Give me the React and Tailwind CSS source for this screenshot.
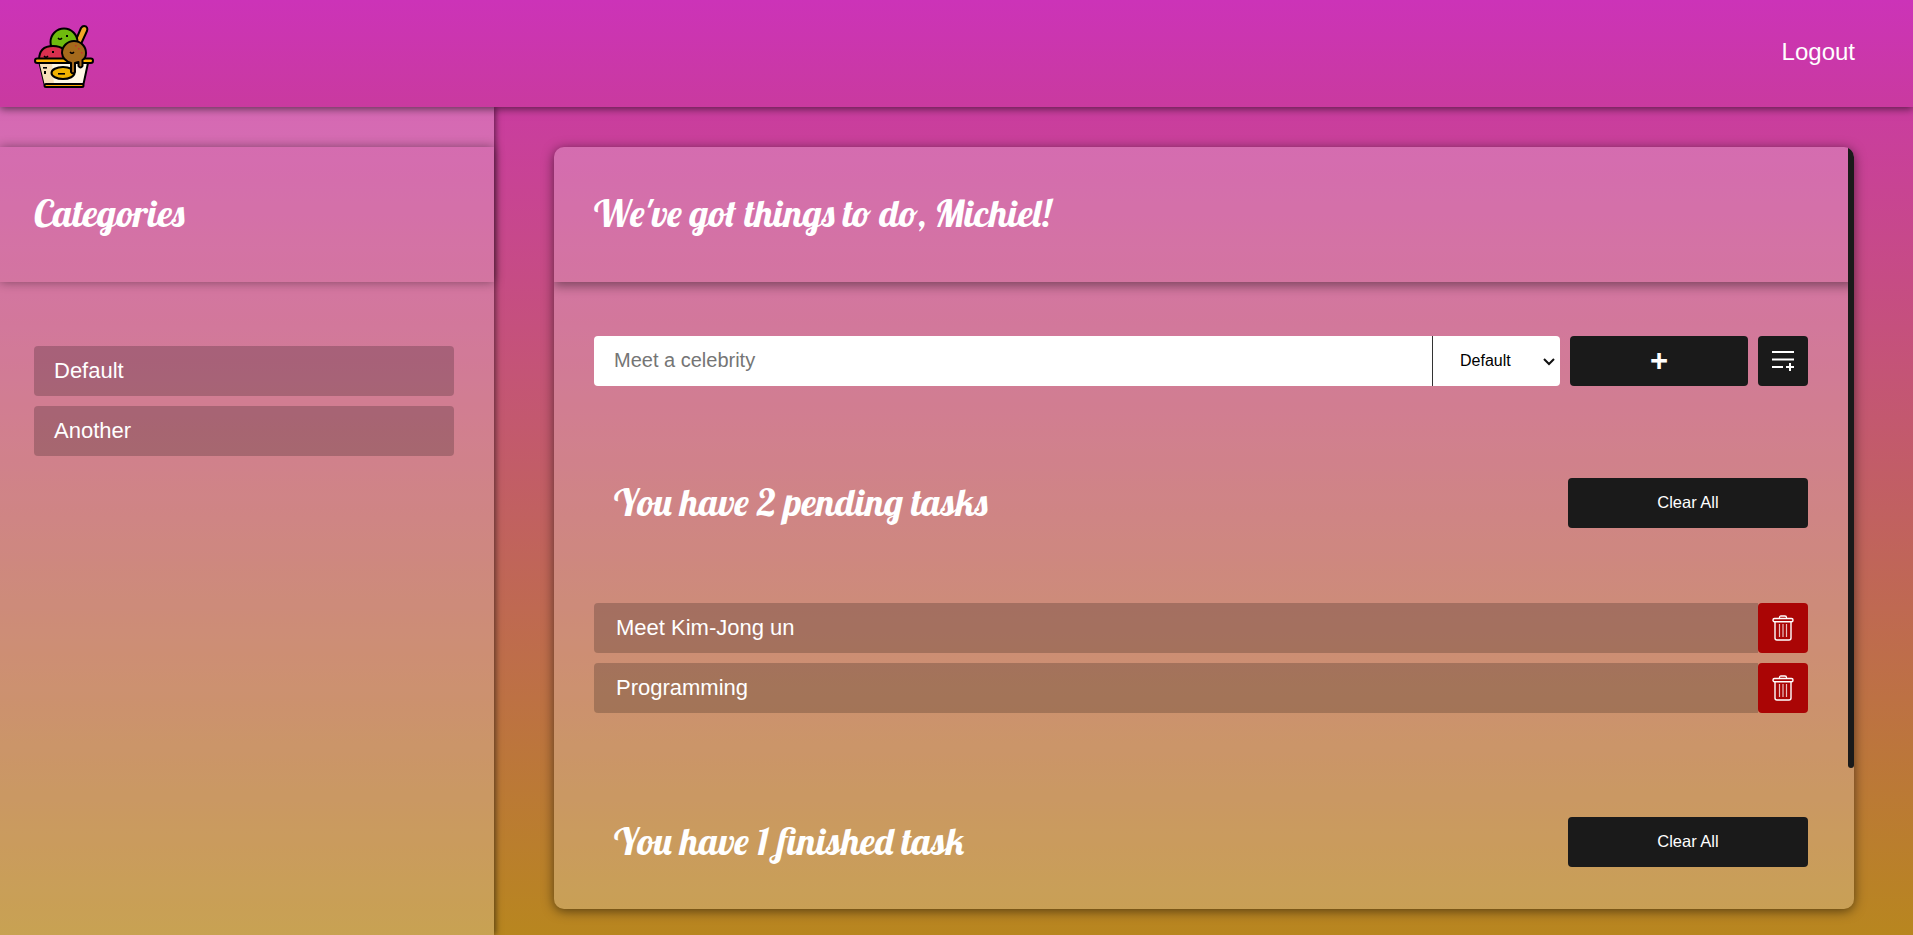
import React from "react";

const script = "font-['Lobster','Pacifico','Z003','URW_Chancery_L',cursive]";

function Logo() {
  return (
    <svg width="60" height="64" viewBox="34 24 60 64" className="mt-[5px] block">
      <g stroke="#000" strokeWidth="2" strokeLinejoin="round">
        <path d="M75 42 L81 28 Q83 25 86 26.5 Q88 28 87 31 L81 44 Z" fill="#f0a828" />
        <circle cx="64" cy="42" r="13.5" fill="#6fbb0e" />
        <path d="M39 60 Q39 46 53 46 Q67 46 67 60 Z" fill="#d9304f" />
        <path d="M39.5 63 H88 L83.5 84 H44.5 Z" fill="#fff8e6" />
        <path d="M39.5 63 H52 L54 84 H44.5 Z" fill="#f7dfb8" stroke="none" />
        <ellipse cx="63" cy="73" rx="11.5" ry="6" fill="#f2b200" />
        <rect x="35" y="58.5" width="58" height="4.5" rx="2.2" fill="#ffb400" />
        <rect x="44.5" y="84" width="39" height="3" rx="1.5" fill="#ffa800" />
        <path d="M62 53 A12 12 0 0 1 86 53 Q86 58 82.5 60 L82.5 66 Q80.5 69 78.5 66 L78.5 62 L75 63 L75 72 Q73 75 71 72 L71 63 Q62.5 60 62 53 Z" fill="#a56a1c" />
      </g>
      <g stroke="#000" strokeWidth="1.4" fill="none">
        <path d="M58 38 Q60 40.5 62 38" />
        <path d="M70 52 Q72 54.5 74 52" />
        <path d="M44 56 Q46 58.5 48 56" />
      </g>
      <g fill="#000">
        <rect x="43" y="67" width="4" height="1.6" />
        <rect x="44" y="71" width="2" height="3" />
        <rect x="58" y="73" width="7" height="1.6" />
        <rect x="66" y="35" width="2" height="2" />
        <rect x="52" y="51" width="2" height="2" />
      </g>
      <g fill="#c9302c">
        <rect x="78" y="48" width="1.5" height="1.5" />
        <rect x="75" y="45" width="1.5" height="1.5" />
        <rect x="81" y="52" width="1.5" height="1.5" />
      </g>
    </svg>
  );
}

function Trash() {
  return (
    <svg width="22" height="26" viewBox="0 0 22 26" fill="none" stroke="#fff" className="block">
      <path d="M7.5 3.5 V2.5 Q7.5 1 9 1 H13 Q14.5 1 14.5 2.5 V3.5" strokeWidth="1.3" />
      <rect x="1" y="3.5" width="20" height="3.2" rx="1.5" strokeWidth="1.4" />
      <path d="M3 6.7 V23 Q3 25 5 25 H17 Q19 25 19 23 V6.7" strokeWidth="1.4" />
      <path d="M7.5 9 V22 M11 9 V22 M14.5 9 V22" strokeWidth="1.2" strokeOpacity="0.75" />
    </svg>
  );
}

function ListPlus() {
  return (
    <svg width="24" height="22" viewBox="0 0 24 22" fill="none" stroke="#fff" strokeWidth="2" className="block">
      <path d="M1 2 H23 M1 9.5 H23 M1 17 H12 M15 17 H23 M19 13 V21" />
    </svg>
  );
}

function SectionHead({ children, className }) {
  return (
    <div className={`flex items-center justify-between ${className}`}>
      <h2 className={`${script} pb-[2px] pl-5 text-[38px] leading-[46px] text-white font-normal`}>{children}</h2>
      <button className="h-[50px] w-[240px] rounded-[4px] bg-[#1a1a1a] pb-[2px] text-[16.5px] text-white">Clear All</button>
    </div>
  );
}

function Task({ children, className }) {
  return (
    <div className={`flex h-[50px] ${className || ""}`}>
      <div className="flex flex-1 items-center rounded-l-[4px] bg-black/20 pb-[2px] pl-[22px] text-[22px] text-white">{children}</div>
      <button className="flex w-[50px] items-center justify-center rounded-[4px] bg-[#aa0505]">
        <Trash />
      </button>
    </div>
  );
}

export default function App() {
  return (
    <div className="flex h-[935px] flex-col overflow-hidden bg-[linear-gradient(180deg,#cc33b0_0%,#b8861f_100%)] font-['Liberation_Sans',Arial,sans-serif]">
      <header className="relative z-20 flex h-[107px] shrink-0 items-center justify-between bg-[linear-gradient(180deg,#cc33b8_0%,#c93a9f_100%)] pl-[34px] pr-[58px] shadow-[0_2px_8px_rgba(0,0,0,0.55)]">
        <Logo />
        <a className="pb-[4px] text-2xl text-white">Logout</a>
      </header>
      <div className="flex min-h-0 flex-1">
        <aside className="relative z-10 w-[494px] shrink-0 bg-white/[.23] pt-10 shadow-[2px_0_6px_rgba(0,0,0,0.5)]">
          <div className="flex h-[135px] items-center pb-[4px] pl-[34px] shadow-[0_0_10px_rgba(0,0,0,0.4)]">
            <h2 className={`${script} text-[38px] leading-[46px] text-white font-normal`}>Categories</h2>
          </div>
          <div className="mt-[64px] flex flex-col gap-[10px] px-[34px] pr-10">
            <div className="flex h-[50px] items-center rounded-[4px] bg-black/20 pb-[2px] pl-5 text-[22px] text-white">Default</div>
            <div className="flex h-[50px] items-center rounded-[4px] bg-black/20 pb-[2px] pl-5 text-[22px] text-white">Another</div>
          </div>
        </aside>
        <main className="min-w-0 flex-1 pb-[26px] pl-[60px] pr-[59px] pt-10">
          <div className="relative h-full overflow-hidden rounded-[10px] bg-white/[.23] shadow-[0_2px_12px_rgba(0,0,0,0.55)]">
            <div className="flex h-[135px] items-center pb-[4px] pl-10 shadow-[0_4px_10px_rgba(0,0,0,0.4)]">
              <h1 className={`${script} text-[38px] leading-[46px] text-white font-normal`}>We've got things to do, Michiel!</h1>
            </div>
            <div className="pl-10 pr-[46px]">
              <div className="mt-[54px] flex h-[50px]">
                <input
                  placeholder="Meet a celebrity"
                  className="min-w-0 flex-1 rounded-l-[4px] border-r border-[#333] bg-white pb-[2px] pl-5 text-xl text-black placeholder:text-[#757575]"
                />
                <div className="relative w-[127px]">
                  <select className="h-full w-full appearance-none rounded-r-[4px] bg-white pl-[27px] text-base text-black">
                    <option>Default</option>
                    <option>Another</option>
                  </select>
                  <svg width="12" height="8" viewBox="0 0 12 8" fill="none" stroke="#111" strokeWidth="2" className="pointer-events-none absolute right-[5px] top-[22px]">
                    <path d="M1 1 L6 6 L11 1" />
                  </svg>
                </div>
                <button className="ml-[10px] w-[178px] rounded-[4px] bg-[#1a1a1a] pb-[2px] text-[31px] font-bold leading-none text-white">+</button>
                <button className="ml-[10px] flex w-[50px] items-center justify-center rounded-[4px] bg-[#1a1a1a]">
                  <ListPlus />
                </button>
              </div>
              <SectionHead className="mt-[92px]">You have 2 pending tasks</SectionHead>
              <Task className="mt-[75px]">Meet Kim-Jong un</Task>
              <Task className="mt-[10px]">Programming</Task>
              <SectionHead className="mt-[104px]">You have 1 finished task</SectionHead>
            </div>
            <div className="absolute right-0 top-0 h-[621px] w-[6px] rounded-b-[3px] bg-[#1a1a1a]" />
          </div>
        </main>
      </div>
    </div>
  );
}
